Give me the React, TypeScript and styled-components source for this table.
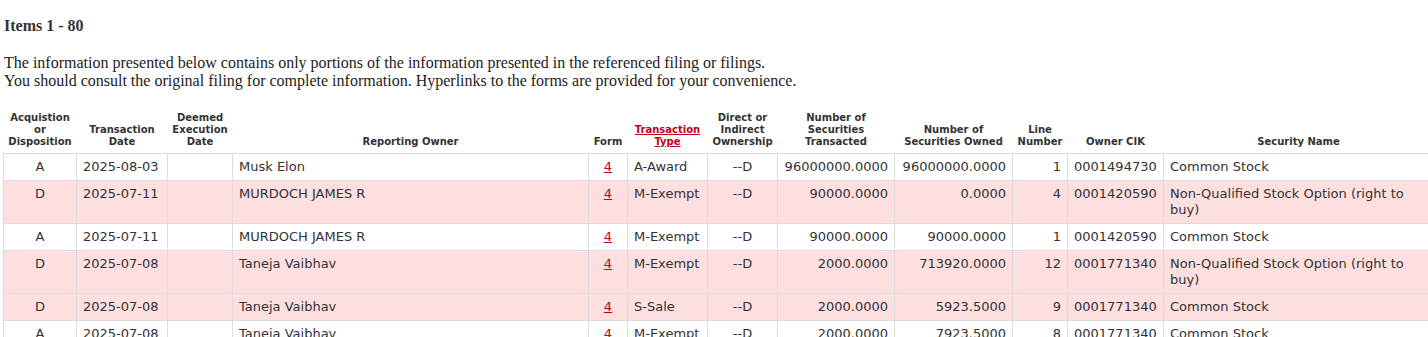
import React, { FC } from 'react';
import styled, { createGlobalStyle } from 'styled-components';

const GlobalStyle = createGlobalStyle`
  html, body {
    margin: 0;
    padding: 0;
    overflow: hidden;
    background: #fff;
  }
`;

const Page = styled.div`
  padding: 17px 0 0 4px;
  font-family: "Liberation Serif", "Times New Roman", serif;
  color: #333;
`;

const Title = styled.div`
  font-size: 16px;
  font-weight: bold;
  line-height: 18px;
`;

const Intro = styled.p`
  margin: 19px 0 0;
  font-size: 16px;
  line-height: 18px;
  color: #222;
`;

const Table = styled.table`
  margin: 22px 0 0 -1px;
  width: 1430px;
  table-layout: fixed;
  border-collapse: collapse;
  font-family: "DejaVu Sans", Verdana, sans-serif;
  color: #333;
`;

const HeadCell = styled.th`
  padding: 0 4px 5px;
  vertical-align: bottom;
  text-align: center;
  font-size: 10px;
  line-height: 12px;
  font-weight: bold;
  color: #333;
`;

const HeadLink = styled.a`
  color: #c00018;
  text-decoration: underline;
`;

const Row = styled.tr<{ $pink: boolean }>`
  background: ${({ $pink }) => ($pink ? '#fddfe0' : '#fff')};
`;

const Cell = styled.td<{ $align?: 'left' | 'center' | 'right' }>`
  padding: 5px 6px 5px;
  border: 1px solid #dcdcdc;
  vertical-align: top;
  text-align: ${({ $align }) => $align ?? 'left'};
  font-size: 13px;
  line-height: 16px;
`;

const FormLink = styled.a`
  color: #c00018;
  text-decoration: underline;
`;

const widths = [73, 91, 65, 356, 39, 80, 70, 117, 118, 55, 96, 270];

interface Txn {
  ad: string;
  date: string;
  owner: string;
  type: string;
  transacted: string;
  owned: string;
  line: string;
  cik: string;
  security: string;
}

const OPTION = 'Non-Qualified Stock Option (right to buy)';

const rows: Txn[] = [
  { ad: 'A', date: '2025-08-03', owner: 'Musk Elon', type: 'A-Award', transacted: '96000000.0000', owned: '96000000.0000', line: '1', cik: '0001494730', security: 'Common Stock' },
  { ad: 'D', date: '2025-07-11', owner: 'MURDOCH JAMES R', type: 'M-Exempt', transacted: '90000.0000', owned: '0.0000', line: '4', cik: '0001420590', security: OPTION },
  { ad: 'A', date: '2025-07-11', owner: 'MURDOCH JAMES R', type: 'M-Exempt', transacted: '90000.0000', owned: '90000.0000', line: '1', cik: '0001420590', security: 'Common Stock' },
  { ad: 'D', date: '2025-07-08', owner: 'Taneja Vaibhav', type: 'M-Exempt', transacted: '2000.0000', owned: '713920.0000', line: '12', cik: '0001771340', security: OPTION },
  { ad: 'D', date: '2025-07-08', owner: 'Taneja Vaibhav', type: 'S-Sale', transacted: '2000.0000', owned: '5923.5000', line: '9', cik: '0001771340', security: 'Common Stock' },
  { ad: 'A', date: '2025-07-08', owner: 'Taneja Vaibhav', type: 'M-Exempt', transacted: '2000.0000', owned: '7923.5000', line: '8', cik: '0001771340', security: 'Common Stock' },
];

const App: FC = () => {
  return (
    <Page>
      <GlobalStyle />
      <Title>Items 1 - 80</Title>
      <Intro>
        The information presented below contains only portions of the information presented in the referenced filing or filings.
        <br />
        You should consult the original filing for complete information. Hyperlinks to the forms are provided for your convenience.
      </Intro>
      <Table>
        <colgroup>
          {widths.map((w, i) => (
            <col key={i} style={{ width: w }} />
          ))}
        </colgroup>
        <thead>
          <tr>
            <HeadCell>Acquistion<br />or<br />Disposition</HeadCell>
            <HeadCell>Transaction<br />Date</HeadCell>
            <HeadCell>Deemed<br />Execution<br />Date</HeadCell>
            <HeadCell>Reporting Owner</HeadCell>
            <HeadCell>Form</HeadCell>
            <HeadCell><HeadLink href="#">Transaction<br />Type</HeadLink></HeadCell>
            <HeadCell>Direct or<br />Indirect<br />Ownership</HeadCell>
            <HeadCell>Number of<br />Securities<br />Transacted</HeadCell>
            <HeadCell>Number of<br />Securities Owned</HeadCell>
            <HeadCell>Line<br />Number</HeadCell>
            <HeadCell>Owner CIK</HeadCell>
            <HeadCell>Security Name</HeadCell>
          </tr>
        </thead>
        <tbody>
          {rows.map((r, i) => (
            <Row key={i} $pink={r.ad === 'D'}>
              <Cell $align="center">{r.ad}</Cell>
              <Cell>{r.date}</Cell>
              <Cell />
              <Cell>{r.owner}</Cell>
              <Cell $align="center"><FormLink href="#">4</FormLink></Cell>
              <Cell>{r.type}</Cell>
              <Cell $align="center">--D</Cell>
              <Cell $align="right">{r.transacted}</Cell>
              <Cell $align="right">{r.owned}</Cell>
              <Cell $align="right">{r.line}</Cell>
              <Cell>{r.cik}</Cell>
              <Cell>{r.security}</Cell>
            </Row>
          ))}
        </tbody>
      </Table>
    </Page>
  );
};

export default App;
